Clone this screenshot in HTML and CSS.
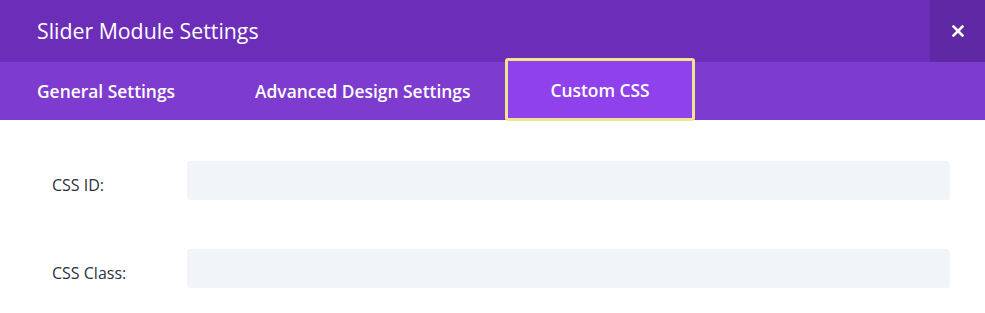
FILE: index.html
```html
<!DOCTYPE html>
<html lang="en">
<head>
    <meta charset="UTF-8">
    <meta name="viewport" content="width=device-width, initial-scale=1.0">
    <title>Slider Module Settings</title>
    <link rel="stylesheet" href="styles.css">
</head>
<body>
    <div class="modal">
        <div class="modal-header">
            <h1 class="modal-title">Slider Module Settings</h1>
            <button class="close-button" aria-label="Close">
                <svg width="12" height="12" viewBox="0 0 12 12">
                    <path d="M1.5 1.5 L10.5 10.5 M10.5 1.5 L1.5 10.5" stroke="#fff" stroke-width="2.6" stroke-linecap="square"/>
                </svg>
            </button>
        </div>

        <div class="tabs">
            <div class="tab tab-general">General Settings</div>
            <div class="tab tab-advanced">Advanced Design Settings</div>
            <div class="tab tab-active">Custom CSS</div>
        </div>

        <div class="modal-body">
            <div class="field">
                <label class="field-label" for="css-id">CSS ID:</label>
                <input class="field-input" type="text" id="css-id">
            </div>
            <div class="field">
                <label class="field-label" for="css-class">CSS Class:</label>
                <input class="field-input" type="text" id="css-class">
            </div>
        </div>
    </div>
</body>
</html>
```

FILE: styles.css
```css
body {
    margin: 0;
    font-family: 'Open Sans', sans-serif;
    background-color: #fff;
}

.modal {
    width: 985px;
}

/* Header */
.modal-header {
    display: flex;
    height: 62px;
    background-color: #6c2eb9;
}

.modal-title {
    flex: 1;
    margin: 0;
    padding-left: 37px;
    font-size: 21.3px;
    font-weight: 400;
    line-height: 62px;
    color: #fff;
}

.close-button {
    width: 55px;
    height: 62px;
    padding: 0;
    border: none;
    background-color: #5f29a6;
    display: flex;
    align-items: center;
    justify-content: center;
    cursor: pointer;
}

/* Tabs */
.tabs {
    display: flex;
    height: 58px;
    background-color: #7e3bd0;
}

.tab {
    display: flex;
    align-items: center;
    font-size: 17.4px;
    font-weight: 600;
    color: #fff;
    cursor: pointer;
}

.tab-general {
    padding: 0 40px 0 37px;
}

.tab-advanced {
    padding: 0 35px 0 40px;
}

.tab-active {
    margin-top: -4px;
    height: 63px;
    box-sizing: border-box;
    padding: 0 42px 0 42px;
    background-color: #8f42ec;
    border: 3px solid #efe58f;
    border-radius: 3px;
}

/* Body */
.modal-body {
    padding: 41px 35px 0 52px;
    display: flex;
    flex-direction: column;
    gap: 49px;
}

.field {
    display: flex;
    align-items: center;
}

.field-label {
    width: 135px;
    padding-top: 8px;
    font-size: 16px;
    font-weight: 400;
    color: #2c323c;
}

.field-input {
    flex: 1;
    height: 39px;
    box-sizing: border-box;
    border: none;
    border-radius: 3px;
    background-color: #f1f4f8;
    padding: 0 10px;
    font-family: inherit;
}
```
